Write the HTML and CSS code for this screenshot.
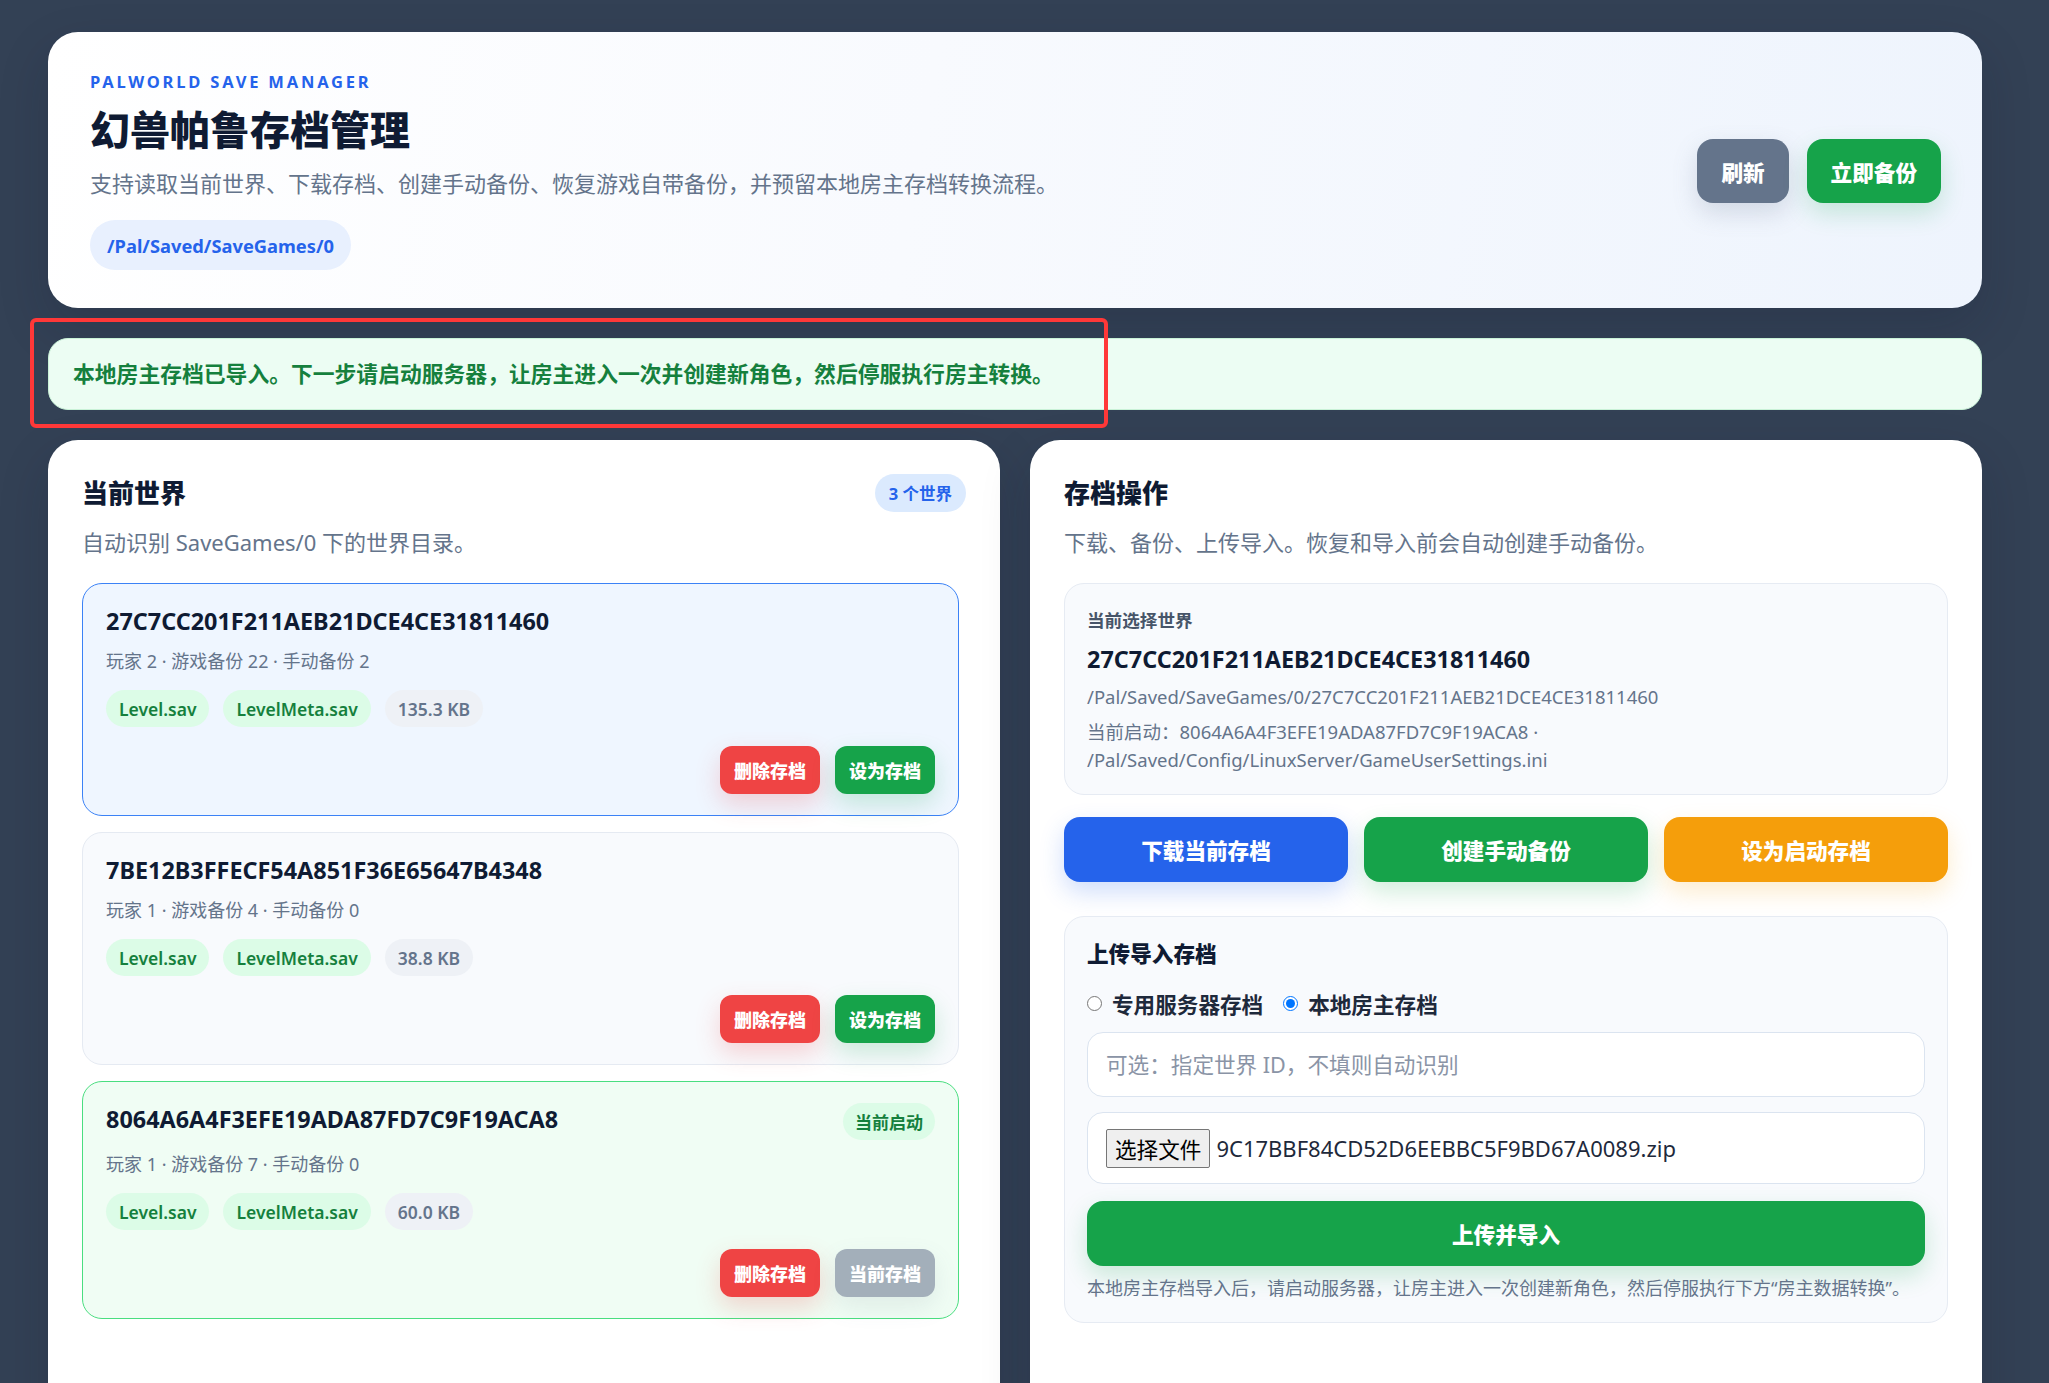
FILE: index.html
```html
<!DOCTYPE html>
<html lang="zh-CN">
<head>
<meta charset="utf-8">
<title>幻兽帕鲁存档管理</title>
<link rel="stylesheet" href="styles.css">
</head>
<body>
<div class="page">
  <header class="hero">
    <div class="hero-text">
      <div class="eyebrow">PALWORLD SAVE MANAGER</div>
      <h1 class="hero-title">幻兽帕鲁存档管理</h1>
      <p class="hero-lead">支持读取当前世界、下载存档、创建手动备份、恢复游戏自带备份，并预留本地房主存档转换流程。</p>
      <span class="path-pill">/Pal/Saved/SaveGames/0</span>
    </div>
    <div class="hero-actions">
      <button class="btn btn-lg btn-slate">刷新</button>
      <button class="btn btn-lg btn-green">立即备份</button>
    </div>
  </header>

  <div class="alert">本地房主存档已导入。下一步请启动服务器，让房主进入一次并创建新角色，然后停服执行房主转换。</div>

  <main class="columns">
    <section class="panel">
      <div class="panel-head">
        <h2 class="panel-title">当前世界</h2>
        <span class="count-badge">3 个世界</span>
      </div>
      <p class="panel-lead">自动识别 SaveGames/0 下的世界目录。</p>

      <div class="world-list">
        <article class="world world-selected">
          <div class="world-head">
            <div class="world-id">27C7CC201F211AEB21DCE4CE31811460</div>
          </div>
          <div class="world-meta">玩家 2 · 游戏备份 22 · 手动备份 2</div>
          <div class="chips">
            <span class="chip chip-green">Level.sav</span>
            <span class="chip chip-green">LevelMeta.sav</span>
            <span class="chip chip-gray">135.3 KB</span>
          </div>
          <div class="world-actions">
            <button class="btn btn-sm btn-red">删除存档</button>
            <button class="btn btn-sm btn-green">设为存档</button>
          </div>
        </article>

        <article class="world">
          <div class="world-head">
            <div class="world-id">7BE12B3FFECF54A851F36E65647B4348</div>
          </div>
          <div class="world-meta">玩家 1 · 游戏备份 4 · 手动备份 0</div>
          <div class="chips">
            <span class="chip chip-green">Level.sav</span>
            <span class="chip chip-green">LevelMeta.sav</span>
            <span class="chip chip-gray">38.8 KB</span>
          </div>
          <div class="world-actions">
            <button class="btn btn-sm btn-red">删除存档</button>
            <button class="btn btn-sm btn-green">设为存档</button>
          </div>
        </article>

        <article class="world world-active">
          <div class="world-head">
            <div class="world-id">8064A6A4F3EFE19ADA87FD7C9F19ACA8</div>
            <span class="active-badge">当前启动</span>
          </div>
          <div class="world-meta">玩家 1 · 游戏备份 7 · 手动备份 0</div>
          <div class="chips">
            <span class="chip chip-green">Level.sav</span>
            <span class="chip chip-green">LevelMeta.sav</span>
            <span class="chip chip-gray">60.0 KB</span>
          </div>
          <div class="world-actions">
            <button class="btn btn-sm btn-red">删除存档</button>
            <button class="btn btn-sm btn-disabled">当前存档</button>
          </div>
        </article>
      </div>
    </section>

    <section class="panel">
      <div class="panel-head">
        <h2 class="panel-title">存档操作</h2>
      </div>
      <p class="panel-lead">下载、备份、上传导入。恢复和导入前会自动创建手动备份。</p>

      <div class="selected-box">
        <div class="selected-label">当前选择世界</div>
        <div class="selected-id">27C7CC201F211AEB21DCE4CE31811460</div>
        <p class="selected-path">/Pal/Saved/SaveGames/0/27C7CC201F211AEB21DCE4CE31811460</p>
        <p class="selected-start">当前启动：8064A6A4F3EFE19ADA87FD7C9F19ACA8 ·<br>/Pal/Saved/Config/LinuxServer/GameUserSettings.ini</p>
      </div>

      <div class="op-buttons">
        <button class="btn btn-op btn-blue">下载当前存档</button>
        <button class="btn btn-op btn-green">创建手动备份</button>
        <button class="btn btn-op btn-orange">设为启动存档</button>
      </div>

      <div class="upload-box">
        <h3 class="upload-title">上传导入存档</h3>
        <div class="radios">
          <label class="radio"><input type="radio" name="kind"> 专用服务器存档</label>
          <label class="radio"><input type="radio" name="kind" checked> 本地房主存档</label>
        </div>
        <input class="text-input" type="text" placeholder="可选：指定世界 ID，不填则自动识别">
        <div class="file-box">
          <span class="file-btn">选择文件</span>
          <span class="file-name">9C17BBF84CD52D6EEBBC5F9BD67A0089.zip</span>
        </div>
        <button class="btn btn-upload btn-green">上传并导入</button>
        <p class="upload-note">本地房主存档导入后，请启动服务器，让房主进入一次创建新角色，然后停服执行下方“房主数据转换”。</p>
      </div>
    </section>
  </main>

  <div class="annotation"></div>
</div>
</body>
</html>
```

FILE: styles.css
```css
* { box-sizing: border-box; }

html, body {
  margin: 0;
  padding: 0;
  background: #334155;
}

body {
  font-family: "Noto Sans", "Noto Sans CJK SC", sans-serif;
  color: #0f1b33;
}

h1, h2, h3, p { margin: 0; }

.page {
  position: relative;
  width: 1934px;
  margin-left: 48px;
  padding-top: 32px;
  display: flex;
  flex-direction: column;
  gap: 30px;
}

/* ---------- hero ---------- */
.hero {
  display: flex;
  align-items: center;
  justify-content: space-between;
  padding: 40px 41px 38px 42px;
  border-radius: 30px;
  background: linear-gradient(100deg, #ffffff 0%, #f8fafe 45%, #eef4fd 100%);
  box-shadow: 0 20px 50px rgba(15, 23, 42, 0.18);
}

.eyebrow {
  font-size: 16.5px;
  line-height: 20px;
  font-weight: 700;
  letter-spacing: 0.17em;
  color: #2563eb;
}

.hero-title {
  margin-top: 14px;
  font-size: 40px;
  line-height: 48px;
  font-weight: 800;
  color: #0f1b33;
}

.hero-lead {
  margin-top: 13px;
  font-size: 22px;
  line-height: 32px;
  color: #64748b;
}

.path-pill {
  display: inline-flex;
  align-items: center;
  height: 50px;
  margin-top: 21px;
  padding: 0 17px;
  border-radius: 25px;
  background: #e8f0fe;
  color: #2563eb;
  font-size: 18.3px;
  font-weight: 700;
}

.hero-actions {
  display: flex;
  gap: 18px;
}

/* ---------- buttons ---------- */
.btn {
  border: 0;
  font-family: inherit;
  font-weight: 800;
  color: #ffffff;
  cursor: pointer;
  white-space: nowrap;
}

.btn-lg {
  height: 64px;
  padding: 0 24px;
  border-radius: 16px;
  font-size: 21.6px;
}

.btn-sm {
  height: 48px;
  padding: 0 14px;
  border-radius: 12px;
  font-size: 18px;
}

.btn-op {
  height: 65px;
  border-radius: 16px;
  font-size: 21.6px;
}

.btn-upload {
  width: 100%;
  height: 65px;
  margin-top: 17px;
  border-radius: 16px;
  font-size: 21.6px;
}

.btn-slate { background: #64748b; box-shadow: 0 10px 24px rgba(100, 116, 139, 0.22); }
.btn-green { background: #16a34a; box-shadow: 0 10px 24px rgba(22, 163, 74, 0.2); }
.btn-red { background: #ef4444; box-shadow: 0 10px 24px rgba(239, 68, 68, 0.22); }
.btn-blue { background: #2563eb; box-shadow: 0 10px 24px rgba(37, 99, 235, 0.22); }
.btn-orange { background: #f59e0b; box-shadow: 0 10px 24px rgba(245, 158, 11, 0.2); }
.btn-disabled { background: #a3afba; box-shadow: 0 10px 24px rgba(100, 116, 139, 0.12); }

/* ---------- alert ---------- */
.alert {
  padding: 19px 24px;
  border: 1px solid #c9f2d7;
  border-radius: 20px;
  background: #ecfdf3;
  color: #15803d;
  font-size: 21.8px;
  line-height: 32px;
  font-weight: 700;
}

/* ---------- columns ---------- */
.columns {
  display: grid;
  grid-template-columns: 1fr 1fr;
  gap: 30px;
}

.panel {
  min-height: 1000px;
  padding: 34px;
  border-radius: 30px;
  background: #ffffff;
  box-shadow: 0 20px 50px rgba(15, 23, 42, 0.18);
}

.panel-head {
  display: flex;
  align-items: center;
  justify-content: space-between;
  min-height: 38px;
}

.panel-title {
  font-size: 26px;
  line-height: 32px;
  font-weight: 800;
  color: #0f1b33;
}

.count-badge {
  display: inline-flex;
  align-items: center;
  height: 38px;
  padding: 0 14px;
  border-radius: 19px;
  background: #dbeafe;
  color: #2563eb;
  font-size: 16.5px;
  font-weight: 700;
}

.panel-lead {
  margin-top: 14px;
  font-size: 22px;
  line-height: 32px;
  color: #64748b;
}

/* ---------- worlds ---------- */
.world-list {
  display: flex;
  flex-direction: column;
  gap: 16px;
  margin-top: 25px;
  padding-right: 7px;
}

.world {
  padding: 21px 23px;
  border: 1.5px solid #e5eaf2;
  border-radius: 20px;
  background: #f8fafd;
}

.world-selected {
  border-color: #3b82f6;
  background: #eff6ff;
}

.world-active {
  border-color: #4ade80;
  background: #f0fdf4;
}

.world-head {
  display: flex;
  align-items: flex-start;
  justify-content: space-between;
}

.world-id {
  font-size: 23.4px;
  line-height: 32px;
  font-weight: 700;
  color: #0f1b33;
}

.active-badge {
  display: inline-flex;
  align-items: center;
  height: 37px;
  padding: 0 12px;
  border-radius: 19px;
  background: #dcfce7;
  color: #15803d;
  font-size: 17px;
  font-weight: 600;
}

.world-meta {
  margin-top: 10px;
  font-size: 18px;
  line-height: 28px;
  color: #64748b;
}

.chips {
  display: flex;
  gap: 14px;
  margin-top: 15px;
}

.chip {
  display: inline-flex;
  align-items: center;
  height: 37px;
  padding: 0 13px;
  border-radius: 19px;
  font-size: 17.5px;
  font-weight: 600;
}

.chip-green { background: #dcfce7; color: #15803d; }
.chip-gray { background: #eef1f6; color: #64748b; }

.world-actions {
  display: flex;
  justify-content: flex-end;
  gap: 15px;
  margin-top: 19px;
}

/* ---------- selected box ---------- */
.selected-box {
  margin-top: 25px;
  padding: 24px 22px 20px;
  border: 1px solid #e6ebf3;
  border-radius: 20px;
  background: #f8fafd;
}

.selected-label {
  font-size: 17.6px;
  line-height: 24px;
  font-weight: 700;
  color: #475569;
}

.selected-id {
  margin-top: 11px;
  font-size: 23.4px;
  line-height: 32px;
  font-weight: 700;
  color: #0f1b33;
}

.selected-path,
.selected-start {
  font-size: 18.5px;
  line-height: 28px;
  color: #64748b;
}

.selected-path { margin-top: 8px; }
.selected-start { margin-top: 7px; }

.op-buttons {
  display: grid;
  grid-template-columns: repeat(3, 1fr);
  gap: 16px;
  margin-top: 22px;
}

/* ---------- upload ---------- */
.upload-box {
  margin-top: 34px;
  padding: 21px 22px 20px;
  border: 1px solid #e6ebf3;
  border-radius: 20px;
  background: #f8fafd;
}

.upload-title {
  font-size: 21.6px;
  line-height: 32px;
  font-weight: 800;
  color: #0f1b33;
}

.radios {
  display: flex;
  gap: 20px;
  margin-top: 17px;
  height: 32px;
  align-items: center;
}

.radio {
  display: inline-flex;
  align-items: center;
  gap: 10px;
  font-size: 21.6px;
  font-weight: 700;
  color: #1e293b;
}

.radio input {
  width: 15px;
  height: 15px;
  margin: 0;
}

.text-input {
  display: block;
  width: 100%;
  height: 65px;
  margin-top: 13px;
  padding: 0 18px;
  border: 1.5px solid #dbe4f0;
  border-radius: 16px;
  background: #ffffff;
  font-family: inherit;
  font-size: 21.6px;
  color: #1e293b;
  outline: none;
}

.text-input::placeholder { color: #8a94a6; }

.file-box {
  display: flex;
  align-items: center;
  height: 72px;
  margin-top: 15px;
  padding: 0 18px;
  border: 1.5px solid #dbe4f0;
  border-radius: 16px;
  background: #ffffff;
}

.file-btn {
  display: inline-flex;
  align-items: center;
  justify-content: center;
  height: 39px;
  padding: 0 8px;
  border: 1px solid #767676;
  border-radius: 2px;
  background: #efefef;
  color: #000000;
  font-size: 21.6px;
}

.file-name {
  margin-left: 6px;
  font-size: 22px;
  color: #1e293b;
}

.upload-note {
  margin-top: 8px;
  font-size: 18px;
  line-height: 28px;
  color: #64748b;
}

/* ---------- screenshot annotation overlay ---------- */
.annotation {
  position: absolute;
  left: -18px;
  top: 318px;
  width: 1078px;
  height: 110px;
  border: 4px solid #ff3838;
  border-radius: 6px;
  pointer-events: none;
}
```
